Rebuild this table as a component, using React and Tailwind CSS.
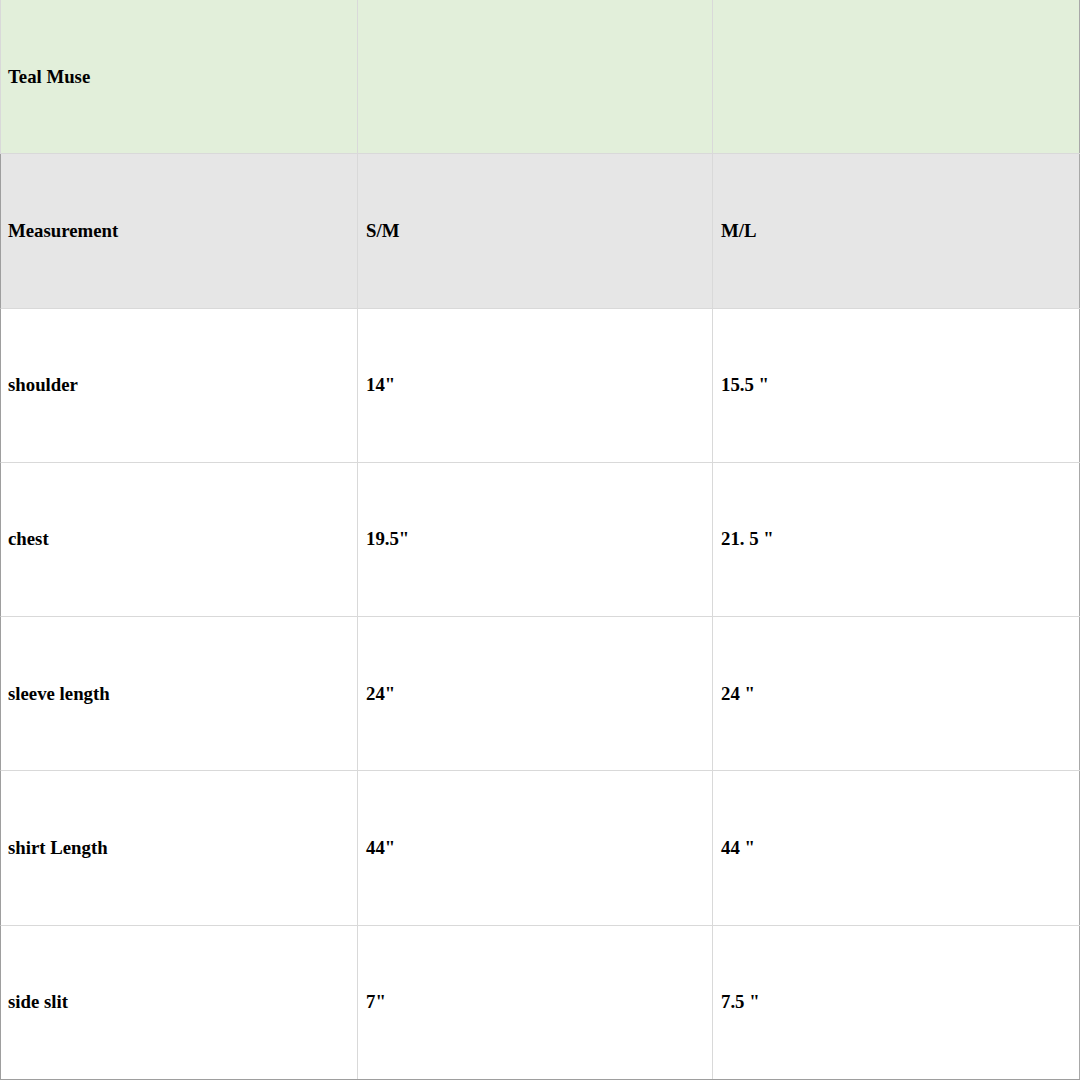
import React from "react";

const rows = [
  ["shoulder", "14\"", "15.5 \""],
  ["chest", "19.5\"", "21. 5 \""],
  ["sleeve length", "24\"", "24 \""],
  ["shirt Length", "44\"", "44 \""],
  ["side slit", "7\"", "7.5 \""],
];

function Row({ cells, bg, leftDark, last }) {
  return (
    <div
      className={`flex h-[154.3px] border-b ${last ? "border-b-[#9e9e9e]" : "border-b-[#d9d9d9]"} ${bg} ${
        leftDark ? "border-l border-l-[#9e9e9e]" : "border-l border-l-[#d9d9d9]"
      }`}
    >
      <div className="w-[357px] flex items-center pl-[7px] border-r border-[#d9d9d9]">{cells[0]}</div>
      <div className="w-[355px] flex items-center pl-[8px] border-r border-[#d9d9d9]">{cells[1]}</div>
      <div className="w-[367px] flex items-center pl-[8px] border-r border-r-[#a8a8a8]">{cells[2]}</div>
    </div>
  );
}

export default function App() {
  return (
    <div
      className="w-[1080px] h-[1080px] bg-white text-black font-bold text-[18.8px] overflow-hidden"
      style={{ fontFamily: '"Liberation Serif", "Times New Roman", serif' }}
    >
      <Row cells={["Teal Muse", "", ""]} bg="bg-[#e2efda]" />
      <Row cells={["Measurement", "S/M", "M/L"]} bg="bg-[#e6e6e6]" leftDark />
      {rows.map((r, i) => (
        <Row key={i} cells={r} bg="bg-white" leftDark last={i === rows.length - 1} />
      ))}
    </div>
  );
}
